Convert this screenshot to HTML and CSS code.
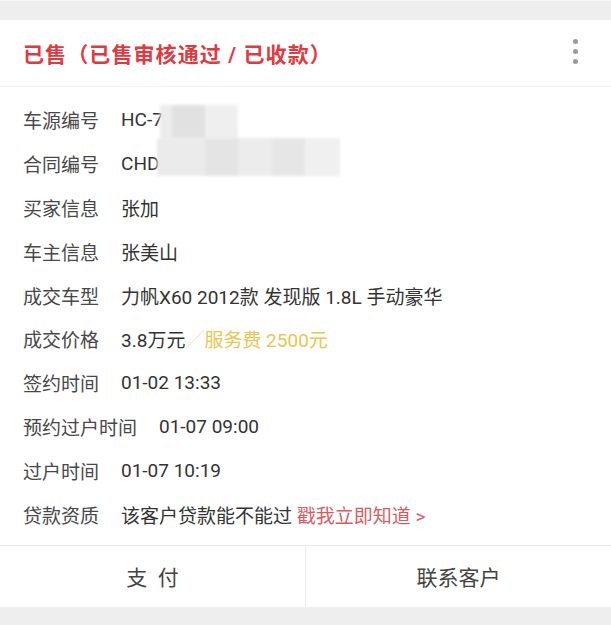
FILE: index.html
```html
<!DOCTYPE html>
<html lang="zh-CN">
<head>
<meta charset="utf-8">
<title>订单详情</title>
<link rel="stylesheet" href="styles.css">
</head>
<body>
<div class="topband"></div>
<div class="card">
  <div class="header">
    <div class="title">已售（已售审核通过 / 已收款）</div>
    <div class="more"><span></span><span></span><span></span></div>
  </div>
  <div class="rows">
    <div class="row"><span class="label">车源编号</span><span class="value">HC-7</span></div>
    <div class="row"><span class="label">合同编号</span><span class="value">CHD</span></div>
    <div class="row"><span class="label">买家信息</span><span class="value">张加</span></div>
    <div class="row"><span class="label">车主信息</span><span class="value">张美山</span></div>
    <div class="row"><span class="label">成交车型</span><span class="value">力帆X60 2012款 发现版 1.8L 手动豪华</span></div>
    <div class="row"><span class="label">成交价格</span><span class="value">3.8万元<span class="slash">／</span><span class="fee">服务费 2500元</span></span></div>
    <div class="row"><span class="label">签约时间</span><span class="value">01-02 13:33</span></div>
    <div class="row"><span class="label">预约过户时间</span><span class="value">01-07 09:00</span></div>
    <div class="row"><span class="label">过户时间</span><span class="value">01-07 10:19</span></div>
    <div class="row"><span class="label">贷款资质</span><span class="value">该客户贷款能不能过 <span class="link">戳我立即知道 &gt;</span></span></div>
  </div>
  <div class="footer">
    <div class="btn">支&ensp;付</div>
    <div class="btn">联系客户</div>
  </div>
  <div class="mosaic m1">
    <i class="t1"></i><i class="t2"></i><i class="t3"></i>
  </div>
  <div class="mosaic m2">
    <i class="t4"></i><i class="t5"></i><i class="t6"></i><i class="t7"></i><i class="t8"></i>
  </div>
</div>
<div class="bottomband"></div>
</body>
</html>
```

FILE: styles.css
```css
html, body {
  margin: 0;
  padding: 0;
  background: #efefef;
  font-family: "Roboto", "Noto Sans CJK SC", sans-serif;
}
.topband {
  height: 20px;
  background: #eeeeee;
  border-top: 1px solid #f6f6f6;
  box-sizing: border-box;
}
.card {
  position: relative;
  background: #ffffff;
}
.header {
  height: 66px;
  display: flex;
  align-items: center;
  justify-content: space-between;
  padding: 0 33px 0 23px;
  border-bottom: 1px solid #f1f1f1;
}
.title {
  color: #e03a41;
  font-size: 21px;
  font-weight: 700;
  letter-spacing: 1.1px;
}
.more {
  display: flex;
  flex-direction: column;
  gap: 5px;
  margin-top: -4px;
}
.more span {
  width: 5px;
  height: 5px;
  border-radius: 50%;
  background: #9a9a9a;
}
.rows {
  padding: 11px 0 9px 23px;
}
.row {
  height: 43.8px;
  display: flex;
  align-items: center;
  font-size: 19px;
  white-space: nowrap;
}
.label {
  color: #484848;
  margin-right: 22px;
}
.value {
  color: #333333;
}
.slash {
  color: #f2e3b0;
}
.fee {
  color: #e9c552;
}
.link {
  color: #db5a62;
}
.footer {
  display: flex;
  height: 61px;
  border-top: 1px solid #e9e9e9;
}
.btn {
  flex: 1;
  display: flex;
  align-items: center;
  justify-content: center;
  font-size: 21px;
  color: #444444;
}
.btn + .btn {
  border-left: 1px solid #ececec;
}
.bottomband {
  height: 16px;
  background: #eeeeee;
}
.mosaic {
  position: absolute;
  display: flex;
  filter: blur(1.5px);
}
.mosaic i {
  display: block;
  height: 100%;
}
.m1 {
  left: 160px;
  top: 85px;
  height: 34px;
}
.m2 {
  left: 157px;
  top: 118px;
  height: 38px;
  border-radius: 12px 0 0 12px;
}
.t1 { width: 12px; background: #ececec; }
.t2 { width: 33px; background: #e1e1e1; }
.t3 { width: 33px; background: #efefef; }
.t4 { width: 48px; background: #ebebeb; }
.t5 { width: 33px; background: #e4e4e4; }
.t6 { width: 34px; background: #ececec; }
.t7 { width: 33px; background: #e6e6e6; }
.t8 { width: 35px; background: #f0f0f0; }
```
